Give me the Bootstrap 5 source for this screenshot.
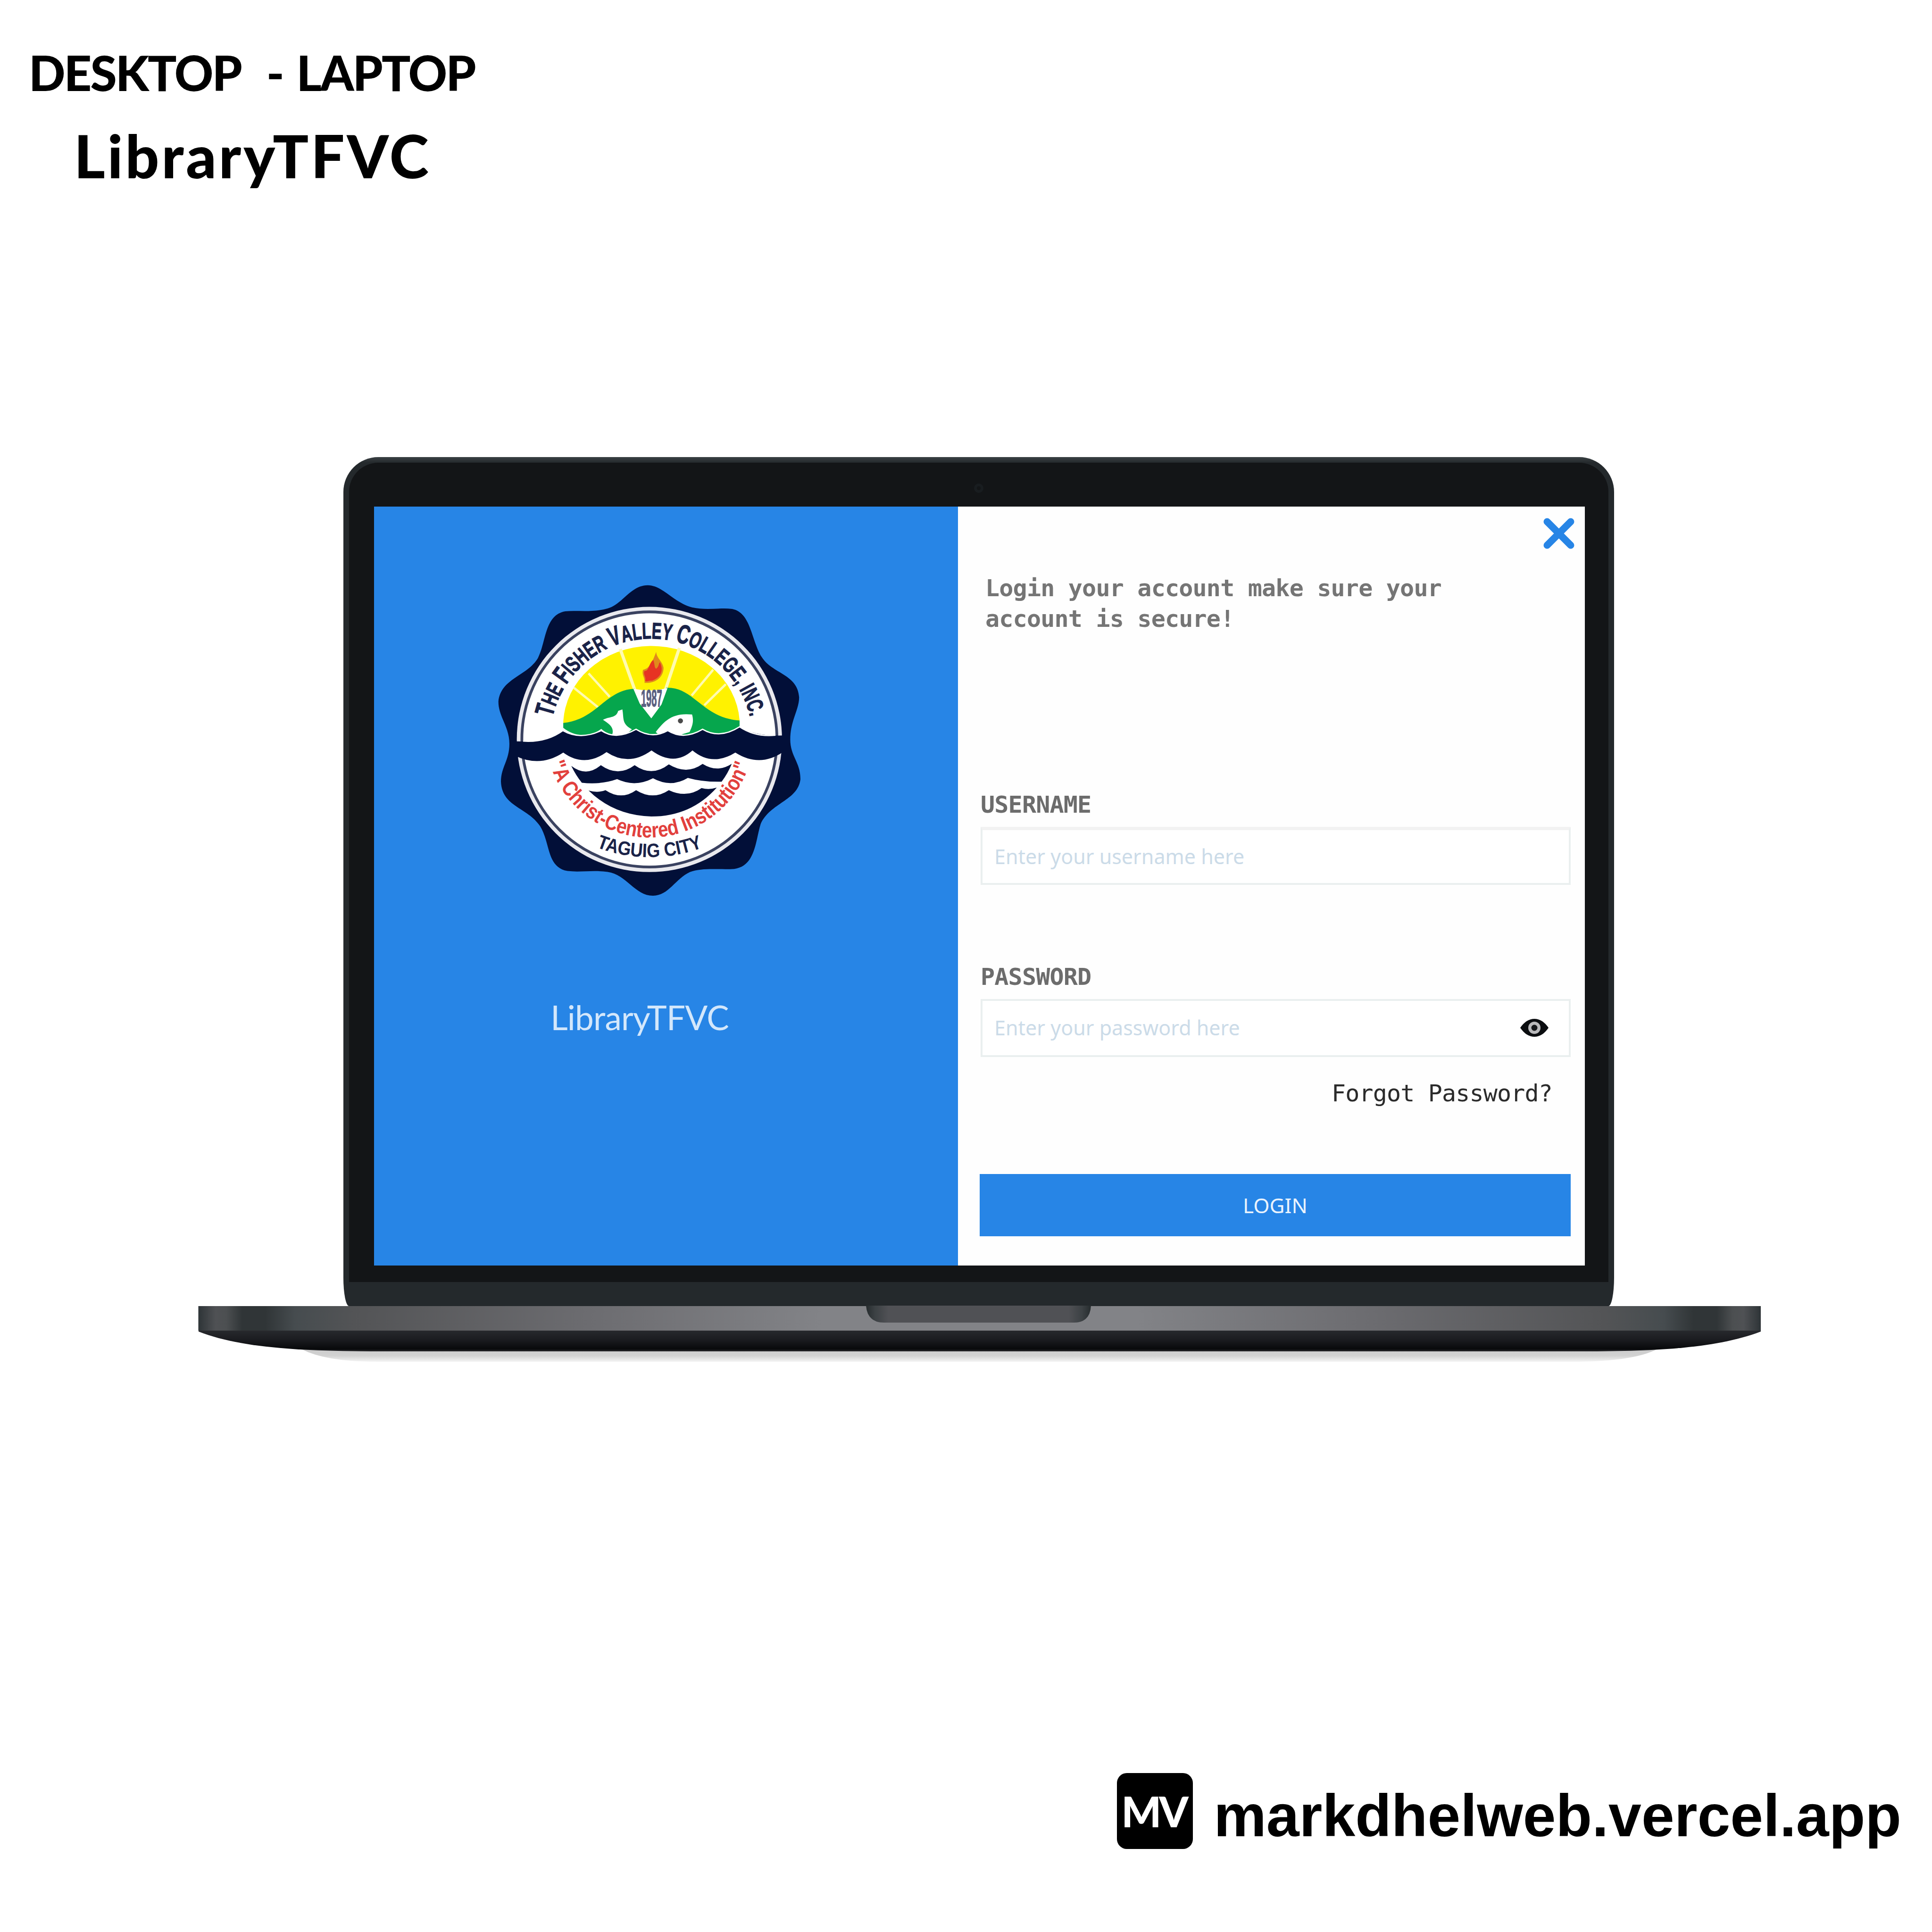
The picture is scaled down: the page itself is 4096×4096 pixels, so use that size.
<!DOCTYPE html>
<html lang="en">
<head>
<meta charset="utf-8">
<meta name="viewport" content="width=device-width, initial-scale=1">
<title>LibraryTFVC</title>
<link href="https://cdn.jsdelivr.net/npm/bootstrap@5.3.0/dist/css/bootstrap.min.css" rel="stylesheet">
<style>
  :root { --tfvc-blue: #2785e6; }
  body { margin: 0; background: #fff; color: #000; }
  .poster { width: 4096px; height: 4096px; overflow: hidden; }
  .poster-head { padding: 94px 0 0 61px; height: 969px; font-family: Lato, sans-serif; font-weight: 900; white-space: pre; }
  .device-kind { font-size: 102px; line-height: 120px; letter-spacing: -2.8px; word-spacing: 7px; }
  .project-name { font-size: 126px; line-height: 150px; margin: 41px 0 0 96px; letter-spacing: 5px; }

  .lid { width: 2694px; height: 1800px; margin-left: 728px; padding: 12px 12px 0; background: linear-gradient(#3a4144 0, #24292c 12px); border-radius: 74px 74px 12px 12px / 74px 74px 60px 60px; }
  .bezel { height: 1737px; padding: 93px 50px 0 53px; background: #131517; border-radius: 62px 62px 0 0; }
  .webcam { left: 1325px; top: 44px; width: 20px; height: 20px; border: 6px solid #191d20; }
  .display { width: 2567px; height: 1609px; background: #fefefe; }
  .brand-side { width: 1238px; background: var(--tfvc-blue); padding-top: 140px; }
  .seal { width: 702px; height: 702px; margin-right: 75px; }
  .brand-text { margin: 191px 112px 0 0; font: 400 71px/100px Lato, sans-serif; letter-spacing: -0.8px; color: #d3e7fb; }
  .form-side { width: 1329px; padding: 24px 30px 0 48px; }
  .close-x { width: 66px; height: 66px; margin-right: -8px; }
  .mono { font-family: "DejaVu Sans Mono", monospace; font-size: 50px; letter-spacing: -0.8px; }
  .intro { margin: 51px 0 0 10px; line-height: 65.4px; font-weight: 700; color: #757575; width: 1150px; }
  .field-label { line-height: 60px; font-weight: 700; color: #6c6c6c; letter-spacing: -0.8px; padding-left: 0; margin: 0; display: block; }
  .label-user { margin-top: 330px; }
  .label-pass { margin-top: 165px; }
  .field { height: 123px; border: 4px solid #eaefef; border-radius: 0; padding: 0 42px 0 25px; margin-top: 17px; background: #fff; }
  .field-user { border-top: 7px solid #f2f2f2; }
  .field input { font: 400 43px/60px "Noto Sans", sans-serif; padding: 0; color: #333; box-shadow: none !important; }
  .field input::placeholder { color: #cbdbe8; opacity: 1; }
  .eye { width: 62px; height: 42px; }
  .forgot { line-height: 60px; margin: 47px 39px 0 0; color: #2b2b2b; text-decoration: none; letter-spacing: -0.85px; }
  .login { height: 132px; width: 1253px; margin: 141px 0 0 -2px; border: 0; border-radius: 0; background: var(--tfvc-blue); color: #eaf3fd; font: 400 44px/60px "Noto Sans", sans-serif; }
  .login:hover { background: #1d78d8; }
  .base { width: 3321px; height: 130px; margin: -1px 0 0 416px; display: block; position: relative; }

  .poster-foot { margin-top: 861px; padding-right: 65px; }
  .mv { width: 161px; height: 161px; border-radius: 21px; background: #000; color: #fff; font: 900 89px/161px Lato, sans-serif; letter-spacing: -5px; padding-right: 5px; }
  .site { font: 700 125.5px/160px "Liberation Sans", sans-serif; margin-left: 44px; padding-top: 11px; }
</style>
</head>
<body>
<div class="poster">
  <header class="poster-head d-flex flex-column align-items-start"><div class="device-kind">DESKTOP  - LAPTOP</div><div class="project-name">LibraryTFVC</div></header>

  <main>
    <div class="lid">
      <div class="bezel position-relative">
        <span class="webcam position-absolute rounded-circle"></span>
        <div class="display d-flex">
          <section class="brand-side d-flex flex-column align-items-center">
            <svg class="seal" viewBox="0 0 1568 1568" role="img" aria-label="The Fisher Valley College seal">
              <defs>
                <path id="arcTop" d="M329 686A480 480 0 0 1 1265 686"/>
                <path id="arcMotto" d="M317 903A494 494 0 0 0 1263 903"/>
                <path id="arcCity" d="M536 1300A700 700 0 0 0 1044 1300"/>
              </defs>
              <path fill="#020f38" d="M780 60C850 60 900 140 990 165C1060 180 1120 165 1180 172C1270 190 1270 320 1320 400C1370 480 1490 480 1497 590C1497 650 1455 700 1455 790C1455 870 1505 900 1503 980C1490 1080 1360 1090 1315 1190C1290 1270 1290 1390 1190 1403C1120 1408 1040 1395 980 1418C910 1450 880 1530 805 1530C720 1530 680 1430 590 1417C520 1408 460 1420 400 1413C300 1395 320 1280 270 1200C210 1110 90 1110 85 990C85 920 125 890 125 810C125 730 72 680 73 610C85 500 210 490 260 405C300 330 290 200 390 183C450 178 520 190 590 170C660 150 700 60 780 60Z"/>
              <circle cx="788" cy="790" r="628" fill="#e9e9ee"/>
              <circle cx="788" cy="790" r="604" fill="#fff" stroke="#3a4260" stroke-width="13"/>
              <path fill="#fff200" d="M380 712A418 376 0 0 1 1215 700L1100 740H480Z"/>
              <g stroke="#fffbb0" stroke-width="15">
                <path d="M650 362L735 600M930 357L862 560"/>
                <path stroke-width="11" d="M500 477L600 588M430 545L545 638M1090 460L988 582M1150 528L1048 628"/>
              </g>
              <path fill="#06a64d" d="M380 712C540 695 580 555 718 550L797 680L868 545C1000 540 1040 690 1215 700V728C1150 785 1080 780 1040 738C960 790 910 790 875 745C830 780 760 780 725 738C680 780 600 780 560 740C500 785 430 775 380 735Z"/>
              <path fill="#fff" d="M712 550Q797 566 874 546L845 625L797 690L742 620Z"/>
              <path fill="#fff" d="M568 697C600 680 630 690 640 655L660 648C668 690 655 715 705 742L670 772H610C625 735 600 718 568 697ZM818 755C860 700 900 662 990 672C1000 705 990 730 978 755L920 772H840Z"/>
              <circle cx="935" cy="702" r="12" fill="#4a4a4a"/>
              <path fill="#e08a1c" d="M820 375C822 405 850 420 855 450C855 490 825 525 765 522C768 495 750 485 758 460C785 455 800 430 820 375Z"/>
              <path fill="#e73323" d="M806 413C815 435 810 450 820 455C835 445 832 425 838 425C860 470 835 500 800 512C785 510 775 520 768 512C775 495 755 480 765 465C785 470 785 430 806 413Z"/>
              <text x="748" y="634" textLength="100" lengthAdjust="spacingAndGlyphs" font-family="Liberation Sans, sans-serif" font-weight="700" font-size="112" fill="#5a6080" stroke="#5a6080" stroke-width="3">1987</text>
              <path fill="#020f38" d="M128 797Q290 812 378 748Q460 795 560 748Q630 795 725 742Q800 790 875 748Q950 795 1040 742Q1120 790 1215 730Q1290 780 1452 770V850H1420Q1310 925 1195 852Q1085 920 992 842Q905 920 798 842Q690 920 585 850Q480 925 380 852Q270 925 150 866H126Z"/>
              <path fill="none" stroke="#fff" stroke-width="6" d="M190 798Q300 805 378 748Q460 795 560 748Q630 795 725 742Q800 790 875 748Q950 795 1040 742Q1120 790 1215 730Q1290 780 1385 770"/>
              <path fill="#020f38" d="M418 915Q490 970 558 912Q640 970 718 912Q800 970 880 908Q965 960 1040 906Q1110 950 1178 905Q1160 950 1130 990Q1040 992 970 972Q890 1020 805 974Q720 1018 635 978Q560 1005 468 995Q440 960 418 915Z"/>
              <path fill="#020f38" d="M500 1032Q545 1045 580 1030Q655 1080 725 1030Q805 1080 880 1030Q965 1070 1035 1020Q1070 1030 1107 1018Q985 1155 797 1155Q620 1150 500 1032Z"/>
              <g font-family="Liberation Sans, sans-serif" font-weight="700">
                <text fill="#1a2348" stroke="#1a2348" stroke-width="3" font-size="108"><textPath href="#arcTop" textLength="1290" lengthAdjust="spacingAndGlyphs"><tspan font-size="126">T</tspan>HE <tspan font-size="126">F</tspan>ISHER <tspan font-size="126">V</tspan>ALLEY <tspan font-size="126">C</tspan>OLLEGE, INC.</textPath></text>
                <text fill="#e2403d" font-size="102"><textPath href="#arcMotto" textLength="1256" lengthAdjust="spacingAndGlyphs">"A Christ-Centered Institution"</textPath></text>
                <text fill="#1a2348" font-size="92"><textPath href="#arcCity" textLength="516" lengthAdjust="spacingAndGlyphs">TAGUIG CITY</textPath></text>
              </g>
            </svg>
            <div class="brand-text">LibraryTFVC</div>
          </section>

          <section class="form-side">
            <div class="d-flex justify-content-end">
              <svg class="close-x" viewBox="0 0 66 66" aria-label="Close"><path d="M8 8L58 58M58 8L8 58" stroke="#2785e6" stroke-width="15" stroke-linecap="round"/></svg>
            </div>
            <form>
              <p class="mono intro mb-0">Login your account make sure your<br>account is secure!</p>
              <label class="mono field-label label-user" for="username">USERNAME</label>
              <div class="field field-user d-flex align-items-center"><input id="username" class="form-control border-0 bg-transparent" type="text" placeholder="Enter your username here"></div>
              <label class="mono field-label label-pass" for="password">PASSWORD</label>
              <div class="field d-flex align-items-center">
                <input id="password" class="form-control border-0 bg-transparent" type="password" placeholder="Enter your password here">
                <svg class="eye flex-shrink-0" viewBox="0 0 62 42"><path d="M1 21Q14 2 31 2T61 21Q48 40 31 40T1 21Z" fill="#0b0d10"/><circle cx="31" cy="21" r="13" fill="#b9b9bb"/><circle cx="31" cy="21" r="6.5" fill="#15171a"/></svg>
              </div>
              <div class="d-flex justify-content-end"><a class="mono forgot" href="#">Forgot Password?</a></div>
              <button class="btn login d-block" type="button">LOGIN</button>
            </form>
          </section>
        </div>
      </div>
    </div>
    <svg class="base" viewBox="416 2768 3321 130">
      <defs>
        <linearGradient id="metal" x1="0" x2="1">
          <stop offset="0" stop-color="#2e3437"/><stop offset=".011" stop-color="#4f5154"/><stop offset=".018" stop-color="#4c4f51"/>
          <stop offset=".028" stop-color="#303537"/><stop offset=".043" stop-color="#303537"/><stop offset=".062" stop-color="#464c4f"/><stop offset=".1" stop-color="#535456"/>
          <stop offset=".25" stop-color="#6c6c70"/><stop offset=".4" stop-color="#828387"/><stop offset=".6" stop-color="#828387"/><stop offset=".75" stop-color="#6c6c70"/>
          <stop offset=".9" stop-color="#535456"/><stop offset=".938" stop-color="#464c4f"/><stop offset=".957" stop-color="#303537"/><stop offset=".972" stop-color="#303537"/>
          <stop offset=".982" stop-color="#4c4f51"/><stop offset=".989" stop-color="#4f5154"/><stop offset="1" stop-color="#2e3437"/>
        </linearGradient>
        <linearGradient id="under" x1="0" x2="0" y1="0" y2="1"><stop offset="0" stop-color="#2b2d31"/><stop offset=".5" stop-color="#1b1c20"/><stop offset=".9" stop-color="#08090b"/><stop offset="1" stop-color="#2a2a2e"/></linearGradient>
        <linearGradient id="floor" x1="0" x2="0" y1="0" y2="1"><stop offset="0" stop-color="#c9c9c9"/><stop offset=".6" stop-color="#d2d2d2"/><stop offset="1" stop-color="#f4f4f4"/></linearGradient>
        <linearGradient id="notch" x1="0" x2="1"><stop offset="0" stop-color="#262c2e"/><stop offset=".04" stop-color="#3c4144"/><stop offset=".1" stop-color="#505155"/><stop offset=".9" stop-color="#505155"/><stop offset=".96" stop-color="#3c4144"/><stop offset="1" stop-color="#262c2e"/></linearGradient>
      </defs>
      <path fill="url(#floor)" d="M630 2855H3522Q3475 2887 3330 2887H800Q680 2887 630 2855Z"/>
      <path fill="url(#under)" d="M421 2815H3733V2823C3640 2858 3520 2865 3340 2865H813C640 2865 510 2858 421 2823Z"/>
      <rect x="420.500" y="2769" width="3312.500" height="52" fill="url(#metal)"/>
      <path fill="url(#notch)" d="M1836 2768H2313Q2311 2804 2277 2804H1874Q1839 2804 1836 2768Z"/>
    </svg>
  </main>

  <footer class="poster-foot d-flex justify-content-end">
    <div class="mv text-center">MV</div>
    <div class="site">markdhelweb.vercel.app</div>
  </footer>
</div>
<script src="https://cdn.jsdelivr.net/npm/bootstrap@5.3.0/dist/js/bootstrap.bundle.min.js"></script>
</body>
</html>
